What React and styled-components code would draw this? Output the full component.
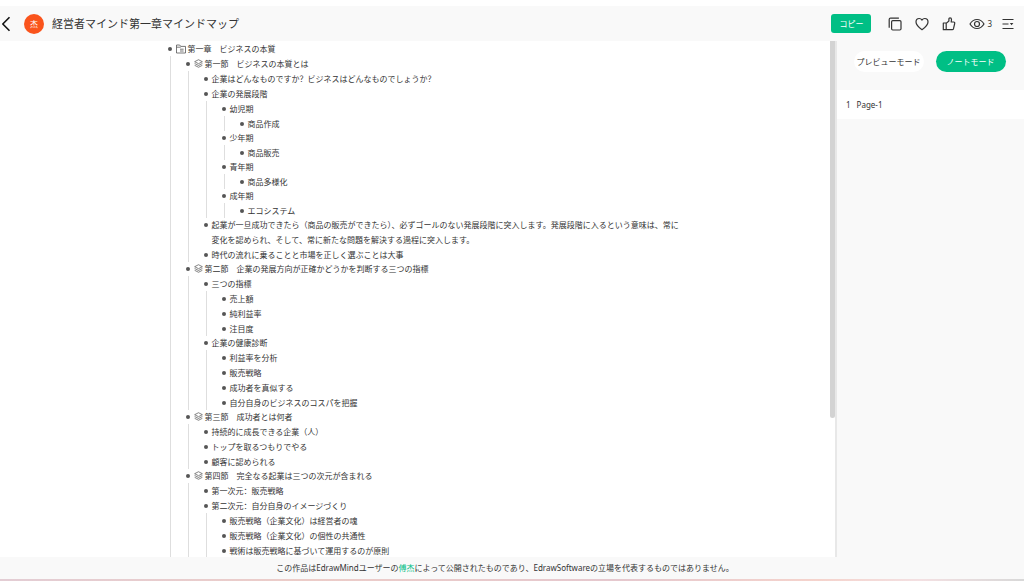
import React, { useState } from 'react';
import styled, { createGlobalStyle } from 'styled-components';

const GlobalStyle = createGlobalStyle`
  * {
    box-sizing: border-box;
  }
  body {
    margin: 0;
    background: #fff;
    color: #333;
    font-family: 'Noto Sans', 'Noto Sans CJK SC', 'Noto Sans CJK JP', sans-serif;
    font-size: 8px;
  }
  button {
    font-family: inherit;
    font-size: inherit;
    color: inherit;
    border: none;
    padding: 0;
    background: none;
    cursor: pointer;
  }
`;

const Page = styled.div`
  display: flex;
  flex-direction: column;
  height: 100vh;
  padding-top: 6px;
`;

const Header = styled.header`
  display: flex;
  align-items: center;
  flex: none;
  height: 35px;
  padding: 0 5px 0 0;
  background: #f9f9f9;
`;

const BackButton = styled.button`
  display: flex;
  width: 24px;
`;

const Avatar = styled.div`
  width: 20px;
  height: 20px;
  border-radius: 50%;
  background: #fa541c;
  color: #fff;
  line-height: 20px;
  text-align: center;
`;

const Title = styled.h1`
  flex: 1;
  margin: 0 0 0 8px;
  font-size: 11px;
  font-weight: 400;
  line-height: 20px;
`;

const CopyButton = styled.button`
  width: 40px;
  height: 19px;
  margin-right: 17px;
  border-radius: 3px;
  background: #00bf85;
  color: #fff;
  line-height: 19px;
`;

const Tools = styled.div`
  display: flex;
  align-items: center;
  gap: 10px;
`;

const ToolButton = styled.button`
  display: flex;
  align-items: center;
  gap: 2px;
  min-width: 17px;
  height: 16px;
  line-height: 16px;
`;

const Icon = styled.svg`
  display: block;
  width: ${(props) => props.$width || 14}px;
  height: ${(props) => props.$height || 14}px;
  fill: none;
  stroke: ${(props) => props.$color || '#333'};
  stroke-width: ${(props) => props.$stroke || 1.2};
  stroke-linejoin: round;
`;

const Body = styled.div`
  display: flex;
  flex: 1;
  min-height: 0;
`;

const Main = styled.main`
  position: relative;
  flex: 1;
  overflow: hidden;
`;

const ScrollThumb = styled.div`
  position: absolute;
  top: 0;
  right: 0;
  width: 5px;
  height: 73%;
  border-radius: 0 0 3px 3px;
  background: #d3d3d3;
`;

const Outline = styled.div`
  max-width: 536px;
  margin: 0 auto;
  padding: 0 0 0 18px;
`;

const Branch = styled.ul`
  margin: 0 0 -1px ${(props) => (props.$root ? 0 : 2)}px;
  padding: 0 0 0 ${(props) => (props.$root ? 0 : 15)}px;
  border-left: ${(props) => (props.$root ? 'none' : '1px solid #dedede')};
  list-style: none;
`;

const Topic = styled.div`
  display: flex;
  line-height: 15px;
`;

const Bullet = styled.span`
  flex: none;
  width: 4px;
  height: 4px;
  margin: 6px 4px 0 0;
  border-radius: 50%;
  background: #555;
`;

const TopicIcon = styled.span`
  flex: none;
  display: flex;
  align-items: center;
  height: 15px;
  margin-right: 2px;
`;

const Sidebar = styled.aside`
  flex: none;
  width: 189px;
  border-left: 2px solid #e8e8e8;
  background: #f9f9f9;
`;

const Modes = styled.div`
  display: flex;
  justify-content: center;
  gap: 12px;
  padding: 10px 2px 18px 0;
`;

const ModeButton = styled.button`
  width: 70px;
  height: 21px;
  border-radius: 11px;
  background: ${(props) => (props.$active ? '#00bf85' : '#fff')};
  color: ${(props) => (props.$active ? '#fff' : '#333')};
  line-height: 21px;
  white-space: nowrap;
`;

const PageRow = styled.button`
  display: flex;
  align-items: center;
  gap: 6px;
  width: 100%;
  height: 29px;
  padding: 0 9px;
  background: #fff;
`;

const Footer = styled.footer`
  flex: none;
  height: 22px;
  padding-right: 14px;
  background: #f9f9f9;
  line-height: 22px;
  text-align: center;

  a {
    color: #00bf85;
    text-decoration: none;
  }
`;

const Strip = styled.div`
  flex: none;
  height: 2px;
  background: linear-gradient(90deg, #e3cdd4, #ecccc8 30%, #e5c8ce 60%, #f5d3cc 80%, #f3e0e2 90%, #d8d8d8);
`;

const FolderIcon = () => (
  <Icon viewBox="0 0 10 10" $width={10} $height={10} $color="#555" $stroke={0.8}>
    <path d="M.5 9V1h3.2l1 1.4h4.8V9z" />
    <path d="M.5 3.2h4.2M4 5.2h3.6M4 7h3.6" />
  </Icon>
);

const LayersIcon = () => (
  <Icon viewBox="0 0 10 10" $width={9} $height={9} $color="#555" $stroke={0.8}>
    <path d="M5 .8 9.3 3 5 5.2.7 3z" />
    <path d="M.7 5 5 7.2 9.3 5M.7 7 5 9.2 9.3 7" />
  </Icon>
);

const topics = [
  {
    text: '第一章　ビジネスの本質',
    icon: 'folder',
    children: [
      {
        text: '第一節　ビジネスの本質とは',
        icon: 'layers',
        children: [
          { text: '企業はどんなものですか？ビジネスはどんなものでしょうか？' },
          {
            text: '企業の発展段階',
            children: [
              { text: '幼児期', children: [{ text: '商品作成' }] },
              { text: '少年期', children: [{ text: '商品販売' }] },
              { text: '青年期', children: [{ text: '商品多様化' }] },
              { text: '成年期', children: [{ text: 'エコシステム' }] },
            ],
          },
          {
            text: '起業が一旦成功できたら（商品の販売ができたら）、必ずゴールのない発展段階に突入します。発展段階に入るという意味は、常に変化を認められ、そして、常に新たな問題を解決する過程に突入します。',
          },
          { text: '時代の流れに乗ることと市場を正しく選ぶことは大事' },
        ],
      },
      {
        text: '第二節　企業の発展方向が正確かどうかを判断する三つの指標',
        icon: 'layers',
        children: [
          {
            text: '三つの指標',
            children: [
              { text: '売上額' },
              { text: '純利益率' },
              { text: '注目度' },
            ],
          },
          {
            text: '企業の健康診断',
            children: [
              { text: '利益率を分析' },
              { text: '販売戦略' },
              { text: '成功者を真似する' },
              { text: '自分自身のビジネスのコスパを把握' },
            ],
          },
        ],
      },
      {
        text: '第三節　成功者とは何者',
        icon: 'layers',
        children: [
          { text: '持続的に成長できる企業（人）' },
          { text: 'トップを取るつもりでやる' },
          { text: '顧客に認められる' },
        ],
      },
      {
        text: '第四節　完全なる起業は三つの次元が含まれる',
        icon: 'layers',
        children: [
          { text: '第一次元：販売戦略' },
          {
            text: '第二次元：自分自身のイメージづくり',
            children: [
              { text: '販売戦略（企業文化）は経営者の魂' },
              { text: '販売戦略（企業文化）の個性の共通性' },
              { text: '戦術は販売戦略に基づいて運用するのが原則' },
            ],
          },
        ],
      },
    ],
  },
];

const TopicList = ({ items, root }) => (
  <Branch $root={root}>
    {items.map((item) => (
      <li key={item.text}>
        <Topic>
          <Bullet />
          {item.icon && (
            <TopicIcon>
              {item.icon === 'folder' ? <FolderIcon /> : <LayersIcon />}
            </TopicIcon>
          )}
          <span>{item.text}</span>
        </Topic>
        {item.children && <TopicList items={item.children} />}
      </li>
    ))}
  </Branch>
);

const App = () => {
  const [mode, setMode] = useState('note');

  return (
    <Page>
      <GlobalStyle />
      <Header>
        <BackButton aria-label="戻る">
          <Icon viewBox="0 0 12 16" $width={12} $height={16} $color="#111" $stroke={1.6}>
            <path d="M9.5 1.2 2.8 8l6.7 6.8" />
          </Icon>
        </BackButton>
        <Avatar>杰</Avatar>
        <Title>経営者マインド第一章マインドマップ</Title>
        <CopyButton>コピー</CopyButton>
        <Tools>
          <ToolButton aria-label="複製">
            <Icon viewBox="0 0 14 14">
              <rect x="3.6" y="3.6" width="9.4" height="9.4" rx="1.2" />
              <path d="M1.2 10.8V2.4c0-.8.5-1.3 1.3-1.3h8.4" />
            </Icon>
          </ToolButton>
          <ToolButton aria-label="お気に入り">
            <Icon viewBox="0 0 14 14">
              <path d="M7 12.7C4.2 10.7 1 8.2 1 5 1 3 2.4 1.5 4.2 1.5 5.4 1.5 6.4 2.1 7 3.1c.6-1 1.6-1.6 2.8-1.6C11.6 1.5 13 3 13 5c0 3.200-3.200 5.700-6 7.700z" />
            </Icon>
          </ToolButton>
          <ToolButton aria-label="いいね">
            <Icon viewBox="0 0 14 14">
              <path d="M1.3 6h2.9v6.7H1.3zM4.2 6.4 6.9 4V2c0-.7.5-1.1 1.1-1.1.9 0 1.5.8 1.5 1.7L9.2 5h2.4c.8 0 1.3.7 1.1 1.5l-1.2 5.2c-.2.6-.6 1-1.2 1H4.2z" />
            </Icon>
          </ToolButton>
          <ToolButton aria-label="閲覧数">
            <Icon viewBox="0 0 16 14" $width={16}>
              <path d="M1 7c1.800-3 4.200-4.500 7-4.500S13.200 4 15 7c-1.800 3-4.200 4.500-7 4.500S2.800 10 1 7z" />
              <circle cx="8" cy="7" r="2.5" />
            </Icon>
            3
          </ToolButton>
          <ToolButton aria-label="メニュー">
            <Icon viewBox="0 0 12 14" $width={12}>
              <path d="M.5 2.500h11M.5 7h6M.5 11.500h11" />
              <path d="M7.800 6h3.600L9.600 8.200z" fill="#333" stroke="none" />
            </Icon>
          </ToolButton>
        </Tools>
      </Header>
      <Body>
        <Main>
          <Outline>
            <TopicList items={topics} root />
          </Outline>
          <ScrollThumb />
        </Main>
        <Sidebar>
          <Modes>
            <ModeButton
              $active={mode === 'preview'}
              onClick={() => setMode('preview')}
            >
              プレビューモード
            </ModeButton>
            <ModeButton $active={mode === 'note'} onClick={() => setMode('note')}>
              ノートモード
            </ModeButton>
          </Modes>
          <PageRow>
            <span>1</span>
            <span>Page-1</span>
          </PageRow>
        </Sidebar>
      </Body>
      <Footer>
        この作品はEdrawMindユーザーの<a href="#author">傅杰</a>
        によって公開されたものであり、EdrawSoftwareの立場を代表するものではありません。
      </Footer>
      <Strip />
    </Page>
  );
};

export default App;
